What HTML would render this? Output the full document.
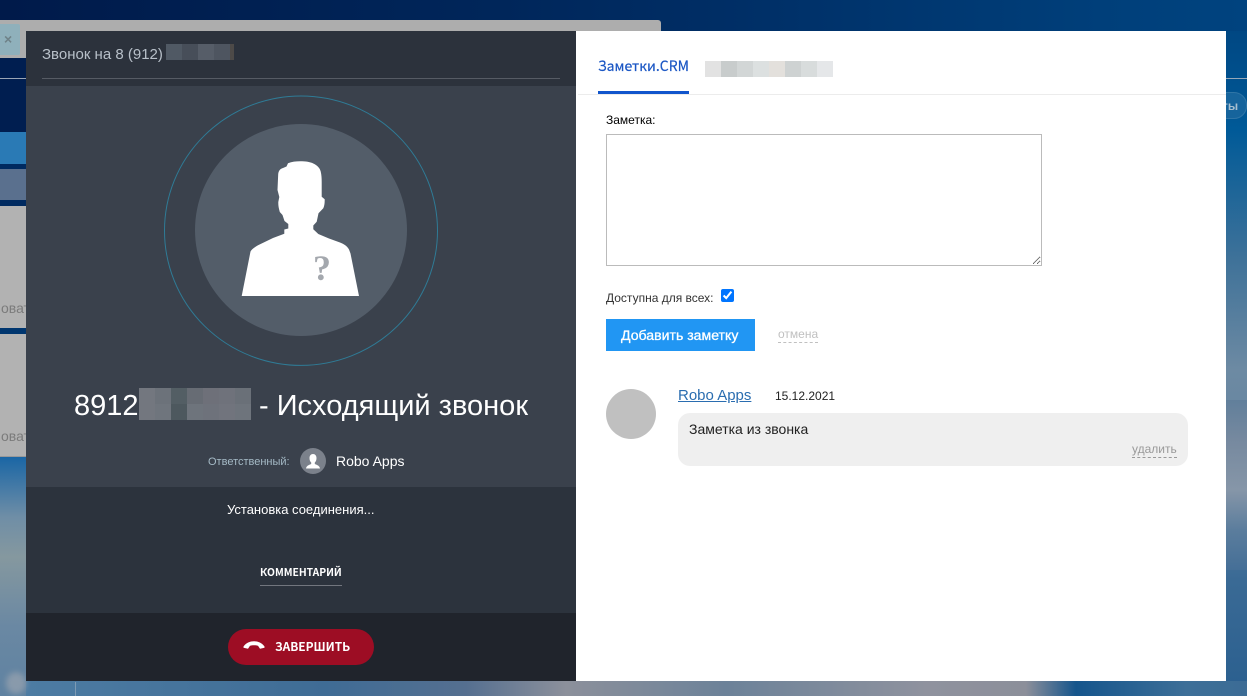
<!DOCTYPE html>
<html lang="ru">
<head>
<meta charset="utf-8">
<title>Звонок</title>
<style>
*{margin:0;padding:0;box-sizing:border-box}
html,body{width:1247px;height:696px;overflow:hidden;background:#2a5f8f}
body{position:relative;font-family:"Liberation Sans","Noto Sans CJK SC",sans-serif}
.a{position:absolute}
.t{position:absolute;white-space:nowrap}
.n{font-family:"Noto Sans CJK SC","Liberation Sans",sans-serif}
.px{position:absolute;display:grid}
.px i{display:block}
</style>
</head>
<body>
<!-- background -->
<div class="a" style="left:0;top:0;width:1247px;height:696px;background:linear-gradient(180deg,#00417c 0,#005a98 130px,#3f7299 260px,#6d8aa3 370px,#61829f 480px,#3a6a95 580px,#2a5f8f 696px)"></div>
<div class="a" style="left:0;top:0;width:1247px;height:31px;background:linear-gradient(90deg,#001a4a 0,#00265a 500px,#002d64 700px,#003f7a 1100px,#00437f 1247px)"></div>
<div class="a" style="left:0;top:457px;width:26px;height:239px;background:linear-gradient(180deg,#1a66a5 0,#6f8ea6 60px,#85989f 100px,#6a88a3 170px,#5f82a1 239px)"></div>
<div class="a" style="left:26px;top:681px;width:1221px;height:15px;background:linear-gradient(90deg,#4d7ca3 0,#3f6c95 300px,#556f90 440px,#8c909b 540px,#6c8299 700px,#8f929e 900px,#8c8f9a 1000px,#15558c 1050px,#3d6f98 1160px,#3c6c95 1221px)"></div>
<div class="a" style="left:1226px;top:400px;width:21px;height:170px;background:linear-gradient(180deg,#617f9b 0,#76899f 40px,#8696a8 90px,#5b7d9d 130px,#456f97 170px)"></div>
<div class="a" style="left:75px;top:682px;width:1px;height:14px;background:#9fb0bf;opacity:.6"></div>
<div class="a" style="left:6px;top:672px;width:20px;height:22px;background:#9aa4b0;border-radius:50%;filter:blur(3px);opacity:.7"></div>

<!-- page behind modal -->
<div class="a" style="left:0;top:58px;width:26px;height:74px;background:#001e50"></div>
<div class="a" style="left:0;top:78px;width:26px;height:1px;background:#9aa5b5"></div>
<div class="a" style="left:1226px;top:78px;width:21px;height:1px;background:#97a8b8"></div>
<div class="a" style="left:1190px;top:92px;width:57px;height:27px;border:1px solid #2f75a6;border-radius:13px;background:#16649c"></div>
<div class="t" style="left:1222px;top:99px;font-size:12px;font-weight:bold;color:#a9c0d0;line-height:14px">ты</div>
<div class="a" style="left:0;top:20px;width:661px;height:38px;background:#adadad;border-radius:0 3px 0 0"></div>
<div class="a" style="left:0;top:24px;width:20px;height:31px;background:#8fb0bb;border-radius:0 2px 2px 0"></div>
<div class="t" style="left:4px;top:30px;font-size:14px;font-weight:bold;color:#6f8288;line-height:18px">×</div>
<div class="a" style="left:0;top:132px;width:26px;height:32px;background:#2a7ab5"></div>
<div class="a" style="left:0;top:164px;width:26px;height:5px;background:#002a60"></div>
<div class="a" style="left:0;top:169px;width:26px;height:31px;background:#5a708e"></div>
<div class="a" style="left:0;top:200px;width:26px;height:6px;background:#002a60"></div>
<div class="a" style="left:0;top:206px;width:26px;height:122px;background:#b2b2b2"></div>
<div class="a" style="left:0;top:328px;width:26px;height:6px;background:#00366f"></div>
<div class="a" style="left:0;top:334px;width:26px;height:123px;background:#b2b2b2;border-bottom:1px solid #999"></div>
<div class="t" style="left:1px;top:300px;font-size:14px;color:#7b7b7b;line-height:16px">оват</div>
<div class="t" style="left:1px;top:428px;font-size:14px;color:#7b7b7b;line-height:16px">оват</div>

<!-- left panel -->
<div class="a" style="left:26px;top:31px;width:550px;height:55px;background:#2c323c"></div>
<div class="a" style="left:26px;top:86px;width:550px;height:401px;background:#3a414c"></div>
<div class="a" style="left:26px;top:487px;width:550px;height:126px;background:#2c333d"></div>
<div class="a" style="left:26px;top:613px;width:550px;height:68px;background:#20242c"></div>
<div class="a" style="left:42px;top:78px;width:518px;height:1px;background:#565b64"></div>
<div class="t" style="left:42px;top:46px;font-size:15px;line-height:17px;color:#b8c0c9">Звонок на 8 (912)</div>
<div class="px" style="left:166px;top:44px;width:68px;height:16px;grid-template-columns:16px 16px 16px 16px 4px">
<i style="background:#505964"></i><i style="background:#474e59"></i><i style="background:#565d68"></i><i style="background:#4e5560"></i><i style="background:#4d4a48"></i>
</div>

<svg class="a" style="left:0;top:0" width="600" height="400" viewBox="0 0 600 400">
<ellipse cx="301" cy="230.7" rx="136.5" ry="134.700" fill="none" stroke="#2f7b96" stroke-width="1"/>
<circle cx="301" cy="230" r="106" fill="#535d69"/>
<path fill="#fff" d="M241.700 296L250.500 251.500C252 249 255 247 258 245.300L273 238L284.300 233.800L284.300 229.500L288.300 228.500L288.300 224L284.500 221L282.500 215L279.800 212C278.600 208 278.200 205 278.300 202L279.300 197L277.500 190L278.200 174C278.700 170.500 280 169 283 168L286.500 166.500L288 163.200C292 161.800 296 161.300 300 161.300C306 161.300 310 162 313.300 163.500C317.500 165.500 319.800 168 320.700 171.500C321.500 175 321.700 178 321.700 182L321.700 196.700L324.700 199.300C324.800 203 324.300 206 323.300 208.300L318.500 213.300L316.700 221.700L313.300 225.500L313.300 229.300L318.300 234L329 238.500L340 242.500C344 244 347 246 349 249.500L350.500 253.500L359 296Z"/>
<text x="322" y="280" text-anchor="middle" font-family="Liberation Serif,serif" font-weight="bold" font-size="36" fill="#a4a8ae">?</text>
</svg>

<div class="t" style="left:74px;top:389px;font-size:29px;line-height:34px;color:#fff">8912</div>
<div class="px" style="left:139px;top:388px;width:112px;height:32px;grid-template-columns:repeat(7,16px);grid-template-rows:16px 16px">
<i style="background:#73777f"></i><i style="background:#6c727a"></i><i style="background:#535e64"></i><i style="background:#676c74"></i><i style="background:#6e7079"></i><i style="background:#6f727b"></i><i style="background:#6a7078"></i>
<i style="background:#73777f"></i><i style="background:#6f757d"></i><i style="background:#4d585e"></i><i style="background:#6e747c"></i><i style="background:#6e727b"></i><i style="background:#71747d"></i><i style="background:#6e747c"></i>
</div>
<div class="t" style="left:259px;top:389px;font-size:29px;line-height:34px;color:#fff">- Исходящий звонок</div>

<div class="t" style="left:208px;top:456px;font-size:11px;line-height:13px;color:#a5bac6">Ответственный:</div>
<svg class="a" style="left:300px;top:448px" width="26" height="26" viewBox="0 0 26 26">
<circle cx="13" cy="13" r="13" fill="#7b818b"/>
<path fill="#fff" d="M6 20.500C6.500 18 8 17.300 11.200 16L11.200 14.500C10 13.500 9.500 12 9.500 10C9.500 7.500 11 6 13 6C15 6 16.500 7.500 16.500 10C16.500 12 16 13.500 14.800 14.500L14.800 16C18 17.300 19.500 18 20 20.500Z"/>
</svg>
<div class="t" style="left:336px;top:453px;font-size:14px;line-height:16px;color:#fff">Robo Apps</div>

<div class="t" style="left:227px;top:502px;font-size:13px;line-height:16px;color:#fff">Установка соединения...</div>
<div class="t n" style="left:260px;top:564px;font-size:10.300px;font-weight:bold;line-height:15px;color:#fff">КОММЕНТАРИЙ</div>
<div class="a" style="left:260px;top:585px;width:82px;height:1px;background:#72767e"></div>

<div class="a" style="left:228px;top:629px;width:146px;height:36px;background:#9d0d24;border-radius:18px"></div>
<svg class="a" style="left:243px;top:640px" width="22" height="11" viewBox="0 0 22 11">
<path fill="#fff" d="M0.500 6.500C3 2.800 7 1.200 11 1.200C15 1.200 19 2.800 21.500 6.500L21.500 7.800L17 8.800L15 5.800C13.500 5 8.500 5 7 5.800L5 8.800L0.500 7.800Z"/>
</svg>
<div class="t n" style="left:275px;top:638px;font-size:11.900px;font-weight:bold;line-height:17px;color:#fff">ЗАВЕРШИТЬ</div>

<!-- right panel -->
<div class="a" style="left:576px;top:31px;width:650px;height:650px;background:#fff"></div>
<div class="a" style="left:578px;top:94px;width:648px;height:1px;background:#ececec"></div>
<div class="t n" style="left:598px;top:57px;font-size:14px;line-height:18px;color:#1a56c4;-webkit-text-stroke:.2px #1a56c4">Заметки.CRM</div>
<div class="a" style="left:598px;top:91px;width:91px;height:3px;background:#1155cc"></div>
<div class="px" style="left:705px;top:61px;width:128px;height:16px;grid-template-columns:repeat(8,16px)">
<i style="background:#e2e2e2"></i><i style="background:#c8cccc"></i><i style="background:#d2d6d6"></i><i style="background:#dce0e0"></i><i style="background:#e3e0dc"></i><i style="background:#ced2d2"></i><i style="background:#d8dcdc"></i><i style="background:#e5e7e9"></i>
</div>

<div class="t" style="left:606px;top:113px;font-size:12px;line-height:14px;color:#000">Заметка:</div>
<textarea class="a" style="left:606px;top:134px;width:436px;height:132px;border:1px solid #bbb;background:#fff;outline:none"></textarea>
<div class="t" style="left:606px;top:291px;font-size:12px;line-height:14px;color:#333">Доступна для всех:</div>
<input class="a" type="checkbox" checked style="left:721px;top:289px;width:13px;height:13px;margin:0">
<div class="a" style="left:606px;top:319px;width:149px;height:32px;background:#2196f3"></div>
<div class="t" style="left:621px;top:327px;font-size:14.100px;line-height:16px;color:#fff;-webkit-text-stroke:.3px #fff">Добавить заметку</div>
<div class="t" style="left:778px;top:327px;font-size:12px;line-height:14px;color:#c0c0c0;border-bottom:1px dashed #c0c0c0;padding-bottom:1px">отмена</div>

<div class="a" style="left:606px;top:389px;width:50px;height:50px;background:#c0c0c0;border-radius:50%"></div>
<div class="t" style="left:678px;top:387px;font-size:15px;line-height:18px;color:#2a6db0;text-decoration:underline">Robo Apps</div>
<div class="t" style="left:775px;top:389px;font-size:12px;line-height:14px;color:#222">15.12.2021</div>
<div class="a" style="left:678px;top:413px;width:510px;height:53px;background:#efefef;border-radius:12px"></div>
<div class="t" style="left:689px;top:421px;font-size:14px;line-height:16px;color:#222">Заметка из звонка</div>
<div class="t" style="left:1132px;top:442px;font-size:12px;line-height:14px;color:#999;border-bottom:1px dashed #999;padding-bottom:1px">удалить</div>
</body>
</html>
